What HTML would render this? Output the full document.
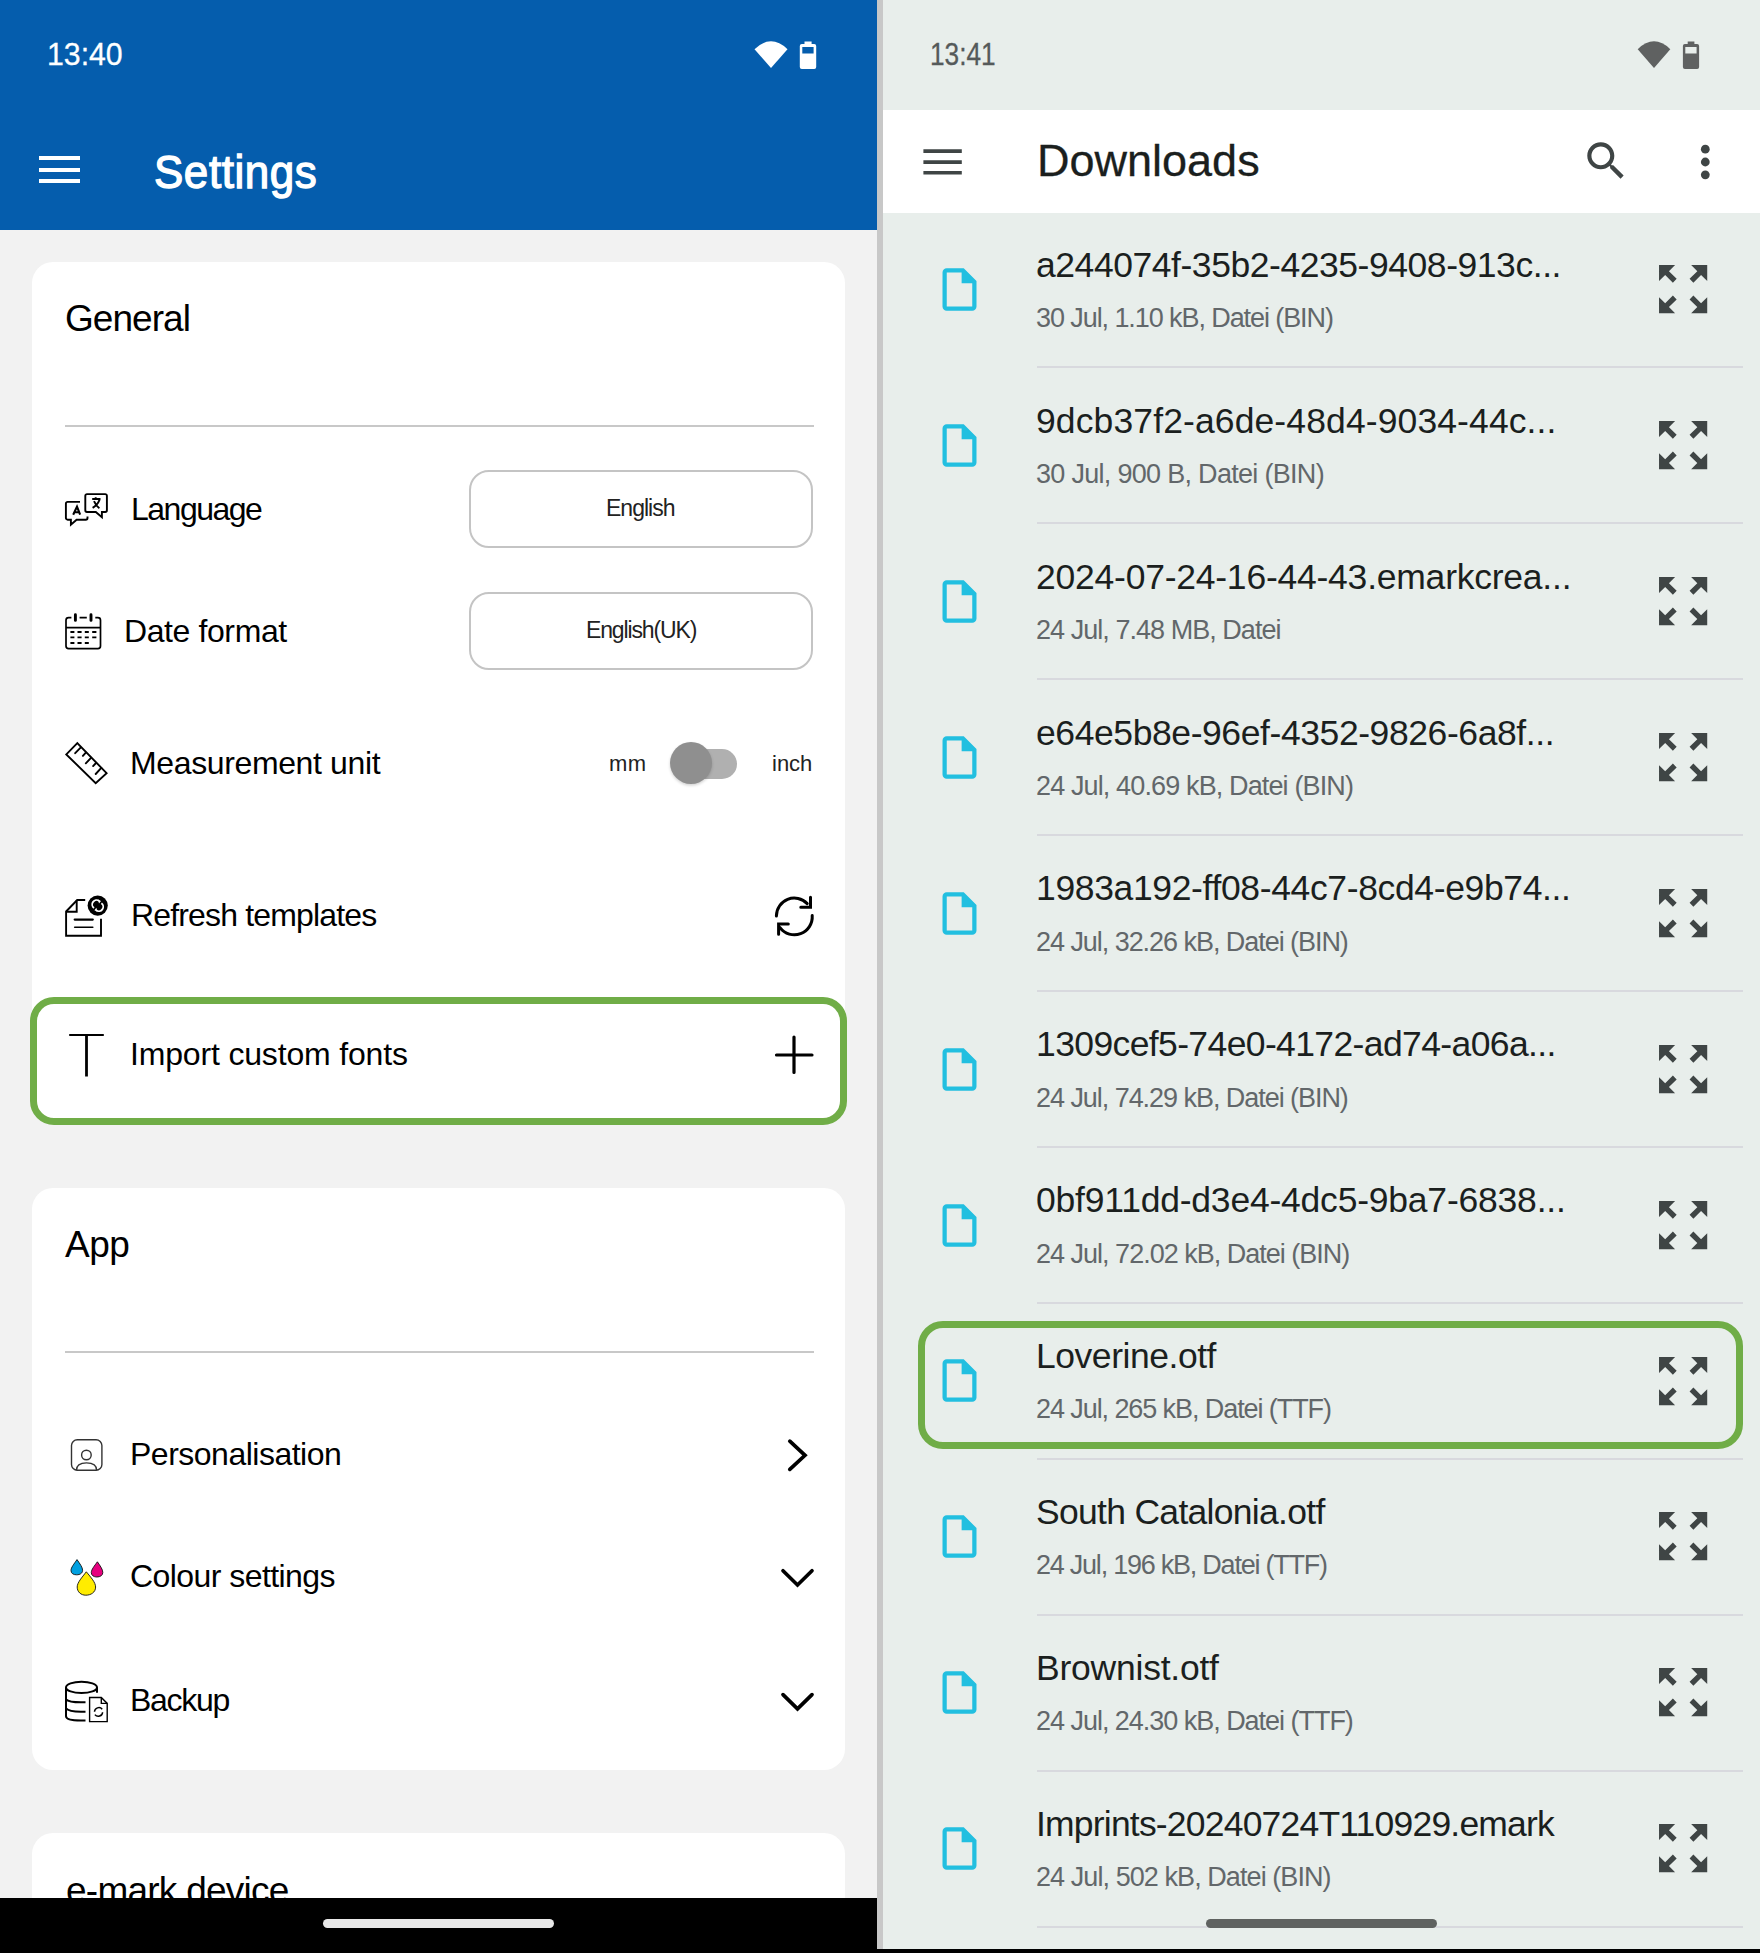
<!DOCTYPE html>
<html><head><meta charset="utf-8">
<style>
*{margin:0;padding:0;box-sizing:border-box}
html,body{width:1760px;height:1953px;overflow:hidden;background:#fff}
body{position:relative;font-family:"Liberation Sans",sans-serif}
.a{position:absolute}
.t{position:absolute;white-space:nowrap;line-height:1}
svg{position:absolute;overflow:visible}
#L{position:absolute;left:0;top:0;width:877px;height:1953px;background:#F2F2F2;overflow:hidden}
#R{position:absolute;left:883px;top:0;width:877px;height:1953px;background:#E8EEEB;overflow:hidden}
#sep{position:absolute;left:877px;top:0;width:6px;height:1953px;background:#C8C8C8}
.card{position:absolute;left:32px;width:813px;background:#fff;border-radius:21px}
.lbl{font-size:32px;color:#000}
.hd{font-size:37px;color:#000}
.box{position:absolute;left:469px;width:344px;height:78px;border:2px solid #C4C4C4;border-radius:20px}
.dv{position:absolute;left:65px;width:749px;height:2px;background:#C8C8C8}
.ti{font-size:35.5px;color:#1B1F1E;letter-spacing:-0.23px}
.st{font-size:27px;color:#62676A;letter-spacing:-1.1px}
.rdv{position:absolute;left:154px;width:706px;height:2px;background:#D8D9DE}
</style></head><body>
<div id="L">
  <div class="a" style="left:0;top:0;width:877px;height:230px;background:#055DAD"></div>
  <div class="t" style="left:47px;top:38px;font-size:32px;color:#fff;transform:scaleX(0.945);transform-origin:0 0;-webkit-text-stroke:0.3px #fff">13:40</div>
  
  <div class="a" style="left:39px;top:156px;width:41px;height:4px;background:#fff"></div>
  <div class="a" style="left:39px;top:167.5px;width:41px;height:4px;background:#fff"></div>
  <div class="a" style="left:39px;top:179px;width:41px;height:4px;background:#fff"></div>
  <div class="t" style="left:154px;top:149px;font-size:46px;color:#fff;-webkit-text-stroke:1.3px #fff;letter-spacing:0.6px;transform:scaleX(0.955);transform-origin:0 0">Settings</div>

  <div class="card" style="top:262px;height:860px"></div>
  <div class="t hd" style="left:65px;top:300px;letter-spacing:-0.95px">General</div>
  <div class="dv" style="top:425px"></div>

  <div class="t lbl" style="left:131px;top:493px;letter-spacing:-1.5px">Language</div>
  <div class="box" style="top:470px"></div>
  <div class="t" style="left:606px;top:497px;font-size:23px;color:#222;letter-spacing:-1px">English</div>

  <div class="t lbl" style="left:124px;top:615px;letter-spacing:-0.4px">Date format</div>
  <div class="box" style="top:592px"></div>
  <div class="t" style="left:586px;top:619px;font-size:23px;color:#222;letter-spacing:-1.13px">English(UK)</div>

  <div class="t lbl" style="left:130px;top:747px;letter-spacing:-0.37px">Measurement unit</div>
  <div class="t" style="left:609px;top:753px;font-size:22px;color:#222;letter-spacing:0.5px">mm</div>
  <div class="a" style="left:680px;top:749px;width:57px;height:30px;border-radius:15px;background:#B0B0B0"></div>
  <div class="a" style="left:670px;top:741.5px;width:42px;height:42px;border-radius:21px;background:#8F8F8F;box-shadow:0 1.5px 3px rgba(0,0,0,.18)"></div>
  <div class="t" style="left:772px;top:753px;font-size:22px;color:#222">inch</div>

  <div class="t lbl" style="left:131px;top:899px;letter-spacing:-0.84px">Refresh templates</div>

  <div class="a" style="left:30px;top:997px;width:817px;height:128px;border:7px solid #70AD47;border-radius:24px;background:#fff"></div>
  <div class="t lbl" style="left:130px;top:1038px;letter-spacing:-0.17px">Import custom fonts</div>

  <div class="card" style="top:1188px;height:582px"></div>
  <div class="t hd" style="left:65px;top:1226px;letter-spacing:-0.5px">App</div>
  <div class="dv" style="top:1351px"></div>
  <div class="t lbl" style="left:130px;top:1437.5px;letter-spacing:-0.5px">Personalisation</div>
  <div class="t lbl" style="left:130px;top:1560px;letter-spacing:-0.56px">Colour settings</div>
  <div class="t lbl" style="left:130px;top:1684px;letter-spacing:-1.3px">Backup</div>

  <div class="card" style="top:1833px;height:200px"></div>
  <div class="t hd" style="left:66px;top:1871.5px;letter-spacing:-0.75px">e-mark device</div>

  <div class="a" style="left:0;top:1898px;width:877px;height:55px;background:#000"></div>
  <div class="a" style="left:323px;top:1919px;width:231px;height:9px;border-radius:4.5px;background:#E8E8E8"></div>
</div>
<div id="sep"></div>
<div class="a" style="left:877px;top:1949px;width:6px;height:4px;background:#000"></div>
<div id="R">
  <div class="t" style="left:47px;top:38px;font-size:32px;color:#555A5A;transform:scaleX(0.82);transform-origin:0 0;-webkit-text-stroke:0.3px #555A5A">13:41</div>
  <div class="a" style="left:0;top:110px;width:877px;height:103px;background:#fff"></div>
  <div class="t" style="left:154px;top:138px;font-size:45px;color:#1B1F1E;-webkit-text-stroke:0.3px #1B1F1E">Downloads</div>
  <svg style="left:51px;top:264.0px" width="51" height="51" viewBox="0 0 24 24"><path d="M14 2H6c-1.1 0-1.99.9-1.99 2L4 20c0 1.1.89 2 1.99 2H18c1.1 0 2-.9 2-2V8l-6-6zM6 20V4h7v5h5v11H6z" fill="#22BFE0"/></svg>
  <div class="t ti" style="left:153px;top:247.8px;letter-spacing:-0.448px">a244074f-35b2-4235-9408-913c...</div>
  <div class="t st" style="left:153px;top:305.0px;letter-spacing:-1.081px">30 Jul, 1.10 kB, Datei (BIN)</div>
  <svg style="left:767.8px;top:257.1px" width="64.25" height="64.25" viewBox="0 0 24 24"><path d="M15 3l2.3 2.3-2.89 2.87 1.42 1.42L18.7 6.7 21 9V3zM3 9l2.3-2.3 2.87 2.89 1.42-1.42L6.7 5.3 9 3H3zm6 12l-2.3-2.3 2.89-2.87-1.42-1.42L5.3 17.3 3 15v6zm12-6l-2.3 2.3-2.87-2.89-1.42 1.42 2.89 2.87L15 21h6z" fill="#3F4545"/></svg>
  <div class="rdv" style="top:366.4px"></div>
  <svg style="left:51px;top:419.91999999999996px" width="51" height="51" viewBox="0 0 24 24"><path d="M14 2H6c-1.1 0-1.99.9-1.99 2L4 20c0 1.1.89 2 1.99 2H18c1.1 0 2-.9 2-2V8l-6-6zM6 20V4h7v5h5v11H6z" fill="#22BFE0"/></svg>
  <div class="t ti" style="left:153px;top:403.72px;letter-spacing:0.115px">9dcb37f2-a6de-48d4-9034-44c...</div>
  <div class="t st" style="left:153px;top:460.91999999999996px;letter-spacing:-0.7px">30 Jul, 900 B, Datei (BIN)</div>
  <svg style="left:767.8px;top:413.02px" width="64.25" height="64.25" viewBox="0 0 24 24"><path d="M15 3l2.3 2.3-2.89 2.87 1.42 1.42L18.7 6.7 21 9V3zM3 9l2.3-2.3 2.87 2.89 1.42-1.42L6.7 5.3 9 3H3zm6 12l-2.3-2.3 2.89-2.87-1.42-1.42L5.3 17.3 3 15v6zm12-6l-2.3 2.3-2.87-2.89-1.42 1.42 2.89 2.87L15 21h6z" fill="#3F4545"/></svg>
  <div class="rdv" style="top:522.3199999999999px"></div>
  <svg style="left:51px;top:575.8399999999999px" width="51" height="51" viewBox="0 0 24 24"><path d="M14 2H6c-1.1 0-1.99.9-1.99 2L4 20c0 1.1.89 2 1.99 2H18c1.1 0 2-.9 2-2V8l-6-6zM6 20V4h7v5h5v11H6z" fill="#22BFE0"/></svg>
  <div class="t ti" style="left:153px;top:559.64px;letter-spacing:-0.231px">2024-07-24-16-44-43.emarkcrea...</div>
  <div class="t st" style="left:153px;top:616.8399999999999px;letter-spacing:-0.959px">24 Jul, 7.48 MB, Datei</div>
  <svg style="left:767.8px;top:568.94px" width="64.25" height="64.25" viewBox="0 0 24 24"><path d="M15 3l2.3 2.3-2.89 2.87 1.42 1.42L18.7 6.7 21 9V3zM3 9l2.3-2.3 2.87 2.89 1.42-1.42L6.7 5.3 9 3H3zm6 12l-2.3-2.3 2.89-2.87-1.42-1.42L5.3 17.3 3 15v6zm12-6l-2.3 2.3-2.87-2.89-1.42 1.42 2.89 2.87L15 21h6z" fill="#3F4545"/></svg>
  <div class="rdv" style="top:678.24px"></div>
  <svg style="left:51px;top:731.76px" width="51" height="51" viewBox="0 0 24 24"><path d="M14 2H6c-1.1 0-1.99.9-1.99 2L4 20c0 1.1.89 2 1.99 2H18c1.1 0 2-.9 2-2V8l-6-6zM6 20V4h7v5h5v11H6z" fill="#22BFE0"/></svg>
  <div class="t ti" style="left:153px;top:715.56px;letter-spacing:-0.414px">e64e5b8e-96ef-4352-9826-6a8f...</div>
  <div class="t st" style="left:153px;top:772.76px;letter-spacing:-0.866px">24 Jul, 40.69 kB, Datei (BIN)</div>
  <svg style="left:767.8px;top:724.86px" width="64.25" height="64.25" viewBox="0 0 24 24"><path d="M15 3l2.3 2.3-2.89 2.87 1.42 1.42L18.7 6.7 21 9V3zM3 9l2.3-2.3 2.87 2.89 1.42-1.42L6.7 5.3 9 3H3zm6 12l-2.3-2.3 2.89-2.87-1.42-1.42L5.3 17.3 3 15v6zm12-6l-2.3 2.3-2.87-2.89-1.42 1.42 2.89 2.87L15 21h6z" fill="#3F4545"/></svg>
  <div class="rdv" style="top:834.16px"></div>
  <svg style="left:51px;top:887.68px" width="51" height="51" viewBox="0 0 24 24"><path d="M14 2H6c-1.1 0-1.99.9-1.99 2L4 20c0 1.1.89 2 1.99 2H18c1.1 0 2-.9 2-2V8l-6-6zM6 20V4h7v5h5v11H6z" fill="#22BFE0"/></svg>
  <div class="t ti" style="left:153px;top:871.48px;letter-spacing:-0.359px">1983a192-ff08-44c7-8cd4-e9b74...</div>
  <div class="t st" style="left:153px;top:928.68px;letter-spacing:-1.046px">24 Jul, 32.26 kB, Datei (BIN)</div>
  <svg style="left:767.8px;top:880.78px" width="64.25" height="64.25" viewBox="0 0 24 24"><path d="M15 3l2.3 2.3-2.89 2.87 1.42 1.42L18.7 6.7 21 9V3zM3 9l2.3-2.3 2.87 2.89 1.42-1.42L6.7 5.3 9 3H3zm6 12l-2.3-2.3 2.89-2.87-1.42-1.42L5.3 17.3 3 15v6zm12-6l-2.3 2.3-2.87-2.89-1.42 1.42 2.89 2.87L15 21h6z" fill="#3F4545"/></svg>
  <div class="rdv" style="top:990.0799999999999px"></div>
  <svg style="left:51px;top:1043.6px" width="51" height="51" viewBox="0 0 24 24"><path d="M14 2H6c-1.1 0-1.99.9-1.99 2L4 20c0 1.1.89 2 1.99 2H18c1.1 0 2-.9 2-2V8l-6-6zM6 20V4h7v5h5v11H6z" fill="#22BFE0"/></svg>
  <div class="t ti" style="left:153px;top:1027.4px;letter-spacing:-0.614px">1309cef5-74e0-4172-ad74-a06a...</div>
  <div class="t st" style="left:153px;top:1084.6px;letter-spacing:-1.046px">24 Jul, 74.29 kB, Datei (BIN)</div>
  <svg style="left:767.8px;top:1036.7px" width="64.25" height="64.25" viewBox="0 0 24 24"><path d="M15 3l2.3 2.3-2.89 2.87 1.42 1.42L18.7 6.7 21 9V3zM3 9l2.3-2.3 2.87 2.89 1.42-1.42L6.7 5.3 9 3H3zm6 12l-2.3-2.3 2.89-2.87-1.42-1.42L5.3 17.3 3 15v6zm12-6l-2.3 2.3-2.87-2.89-1.42 1.42 2.89 2.87L15 21h6z" fill="#3F4545"/></svg>
  <div class="rdv" style="top:1146.0px"></div>
  <svg style="left:51px;top:1199.52px" width="51" height="51" viewBox="0 0 24 24"><path d="M14 2H6c-1.1 0-1.99.9-1.99 2L4 20c0 1.1.89 2 1.99 2H18c1.1 0 2-.9 2-2V8l-6-6zM6 20V4h7v5h5v11H6z" fill="#22BFE0"/></svg>
  <div class="t ti" style="left:153px;top:1183.32px;letter-spacing:-0.214px">0bf911dd-d3e4-4dc5-9ba7-6838...</div>
  <div class="t st" style="left:153px;top:1240.52px;letter-spacing:-0.993px">24 Jul, 72.02 kB, Datei (BIN)</div>
  <svg style="left:767.8px;top:1192.62px" width="64.25" height="64.25" viewBox="0 0 24 24"><path d="M15 3l2.3 2.3-2.89 2.87 1.42 1.42L18.7 6.7 21 9V3zM3 9l2.3-2.3 2.87 2.89 1.42-1.42L6.7 5.3 9 3H3zm6 12l-2.3-2.3 2.89-2.87-1.42-1.42L5.3 17.3 3 15v6zm12-6l-2.3 2.3-2.87-2.89-1.42 1.42 2.89 2.87L15 21h6z" fill="#3F4545"/></svg>
  <div class="rdv" style="top:1301.92px"></div>
  <svg style="left:51px;top:1355.44px" width="51" height="51" viewBox="0 0 24 24"><path d="M14 2H6c-1.1 0-1.99.9-1.99 2L4 20c0 1.1.89 2 1.99 2H18c1.1 0 2-.9 2-2V8l-6-6zM6 20V4h7v5h5v11H6z" fill="#22BFE0"/></svg>
  <div class="t ti" style="left:153px;top:1339.24px;letter-spacing:-0.457px">Loverine.otf</div>
  <div class="t st" style="left:153px;top:1396.44px;letter-spacing:-1.082px">24 Jul, 265 kB, Datei (TTF)</div>
  <svg style="left:767.8px;top:1348.54px" width="64.25" height="64.25" viewBox="0 0 24 24"><path d="M15 3l2.3 2.3-2.89 2.87 1.42 1.42L18.7 6.7 21 9V3zM3 9l2.3-2.3 2.87 2.89 1.42-1.42L6.7 5.3 9 3H3zm6 12l-2.3-2.3 2.89-2.87-1.42-1.42L5.3 17.3 3 15v6zm12-6l-2.3 2.3-2.87-2.89-1.42 1.42 2.89 2.87L15 21h6z" fill="#3F4545"/></svg>
  <div class="rdv" style="top:1457.8400000000001px"></div>
  <svg style="left:51px;top:1511.36px" width="51" height="51" viewBox="0 0 24 24"><path d="M14 2H6c-1.1 0-1.99.9-1.99 2L4 20c0 1.1.89 2 1.99 2H18c1.1 0 2-.9 2-2V8l-6-6zM6 20V4h7v5h5v11H6z" fill="#22BFE0"/></svg>
  <div class="t ti" style="left:153px;top:1495.1599999999999px;letter-spacing:-0.702px">South Catalonia.otf</div>
  <div class="t st" style="left:153px;top:1552.36px;letter-spacing:-1.235px">24 Jul, 196 kB, Datei (TTF)</div>
  <svg style="left:767.8px;top:1504.46px" width="64.25" height="64.25" viewBox="0 0 24 24"><path d="M15 3l2.3 2.3-2.89 2.87 1.42 1.42L18.7 6.7 21 9V3zM3 9l2.3-2.3 2.87 2.89 1.42-1.42L6.7 5.3 9 3H3zm6 12l-2.3-2.3 2.89-2.87-1.42-1.42L5.3 17.3 3 15v6zm12-6l-2.3 2.3-2.87-2.89-1.42 1.42 2.89 2.87L15 21h6z" fill="#3F4545"/></svg>
  <div class="rdv" style="top:1613.7599999999998px"></div>
  <svg style="left:51px;top:1667.28px" width="51" height="51" viewBox="0 0 24 24"><path d="M14 2H6c-1.1 0-1.99.9-1.99 2L4 20c0 1.1.89 2 1.99 2H18c1.1 0 2-.9 2-2V8l-6-6zM6 20V4h7v5h5v11H6z" fill="#22BFE0"/></svg>
  <div class="t ti" style="left:153px;top:1651.08px;letter-spacing:-0.229px">Brownist.otf</div>
  <div class="t st" style="left:153px;top:1708.28px;letter-spacing:-1.028px">24 Jul, 24.30 kB, Datei (TTF)</div>
  <svg style="left:767.8px;top:1660.38px" width="64.25" height="64.25" viewBox="0 0 24 24"><path d="M15 3l2.3 2.3-2.89 2.87 1.42 1.42L18.7 6.7 21 9V3zM3 9l2.3-2.3 2.87 2.89 1.42-1.42L6.7 5.3 9 3H3zm6 12l-2.3-2.3 2.89-2.87-1.42-1.42L5.3 17.3 3 15v6zm12-6l-2.3 2.3-2.87-2.89-1.42 1.42 2.89 2.87L15 21h6z" fill="#3F4545"/></svg>
  <div class="rdv" style="top:1769.6799999999998px"></div>
  <svg style="left:51px;top:1823.2px" width="51" height="51" viewBox="0 0 24 24"><path d="M14 2H6c-1.1 0-1.99.9-1.99 2L4 20c0 1.1.89 2 1.99 2H18c1.1 0 2-.9 2-2V8l-6-6zM6 20V4h7v5h5v11H6z" fill="#22BFE0"/></svg>
  <div class="t ti" style="left:153px;top:1807.0px;letter-spacing:-0.8px">Imprints-20240724T110929.emark</div>
  <div class="t st" style="left:153px;top:1864.2px;letter-spacing:-0.926px">24 Jul, 502 kB, Datei (BIN)</div>
  <svg style="left:767.8px;top:1816.3000000000002px" width="64.25" height="64.25" viewBox="0 0 24 24"><path d="M15 3l2.3 2.3-2.89 2.87 1.42 1.42L18.7 6.7 21 9V3zM3 9l2.3-2.3 2.87 2.89 1.42-1.42L6.7 5.3 9 3H3zm6 12l-2.3-2.3 2.89-2.87-1.42-1.42L5.3 17.3 3 15v6zm12-6l-2.3 2.3-2.87-2.89-1.42 1.42 2.89 2.87L15 21h6z" fill="#3F4545"/></svg>
  <div class="rdv" style="top:1925.6px"></div>
  <div class="a" style="left:35px;top:1321px;width:825px;height:128px;border:7px solid #70AD47;border-radius:25px"></div>
  <div class="a" style="left:0;top:1949px;width:877px;height:4px;background:#000"></div>
  <div class="a" style="left:323px;top:1919px;width:231px;height:9px;border-radius:4.5px;background:#5F6260"></div>
</div>
<svg style="left:0;top:0" width="1760" height="1953" viewBox="0 0 1760 1953">
<g fill="none" stroke="#000" stroke-linecap="butt" stroke-linejoin="miter">
 <!-- language icon -->
 <g stroke-width="1.9">
  <path d="M80 501.9 H67.6 a1.7 1.7 0 0 0 -1.7 1.7 V518 a1.7 1.7 0 0 0 1.7 1.7 H70.9 V524.7 L76.6 519.7 H85.8 a1.7 1.7 0 0 0 1.7 -1.7 V516.6"/>
  <path d="M87 494.1 H105.2 a1.7 1.7 0 0 1 1.7 1.7 V510.3 a1.7 1.7 0 0 1 -1.7 1.7 H101.9 V517.2 L95.8 512 H87 a1.7 1.7 0 0 1 -1.7 -1.7 V495.8 a1.7 1.7 0 0 1 1.7 -1.7z"/>
  <path d="M73.2 514.7 L77 506.6 L80.1 514.7 M74.3 512.3 H79.2" stroke-width="2.1"/>
  <path d="M92.2 499 H100.5 M95.7 497.2 V499 M94 501.2 Q96 506 99.4 508.2 M99.6 499.6 Q97.5 505 92.6 507.9" stroke-width="1.9"/>
 </g>
 <!-- calendar -->
 <g stroke-width="1.7">
  <path d="M71.4 617.7 H68.6 a2.6 2.6 0 0 0 -2.6 2.6 V646 a2.6 2.6 0 0 0 2.6 2.6 H97.9 a2.6 2.6 0 0 0 2.6 -2.6 V620.3 a2.6 2.6 0 0 0 -2.6 -2.6 H95.3"/>
  <path d="M79.6 617.7 H86.8 M66 627.6 H100.5"/>
  <path d="M75.4 614.8 V620.4 M91 614.8 V620.4" stroke-width="2.9" stroke-linecap="round"/>
  <path d="M70.4 632 H74.4 M77.5 632 H81.6 M84.8 632 H88.8 M92.2 632 H96.4" stroke-width="2.2"/>
  <path d="M70.4 637.4 H74.4 M77.5 637.4 H81.6 M84.8 637.4 H88.8 M92.2 637.4 H96.4 M70.4 643 H74.4 M77.5 643 H81.6 M84.8 643 H88.8" stroke-width="1.8"/>
 </g>
 <!-- ruler -->
 <g stroke-width="1.9">
  <path d="M77.3 743.2 L66.3 754.4 L95.7 783.2 L106.6 773.1 Z"/>
  <path d="M80.6 747.7 L75.2 753.2 M85.8 752.6 L82.9 755.9 M91 757.8 L85.8 763.3 M96 763 L93.1 766.1 M101.3 767.9 L95.7 774" stroke-linecap="round"/>
 </g>
 <!-- refresh doc -->
 <g stroke-width="1.9">
  <path d="M85.2 900 H77.2 L66.1 911.5 V935.7 H101 V918.7"/>
  <path d="M76.7 900 V911.8 H66.1"/>
  <path d="M74.7 919.6 H92.8" stroke-width="2.2" stroke-linecap="round"/>
  <path d="M74.7 927.3 H92.8" stroke-width="1.6" stroke-linecap="round"/>
 </g>
 <circle cx="97.7" cy="905.6" r="10.1" fill="#000" stroke="none"/>
 <path d="M94 908 A4.2 4.2 0 0 1 99.2 900.9 M101.4 903.2 A4.2 4.2 0 0 1 96.2 910.3" stroke="#fff" stroke-width="1.8"/>
 <path d="M98 899.5 L101 901 L99 903.5 Z M97.4 911.7 L94.4 910.2 L96.4 907.7 Z" fill="#fff" stroke="none"/>
 <!-- refresh arrows right -->
 <g stroke-width="3" stroke-linecap="round">
  <path d="M776.4 916 A17.9 17.9 0 0 1 807.2 903.6"/>
  <path d="M810.5 897.3 V907.2 H800.8"/>
  <path d="M812.2 915.6 A17.9 17.9 0 0 1 780 927.6"/>
  <path d="M778.6 934.2 V924 H788.3"/>
 </g>
 <!-- T icon -->
 <path d="M70 1035 H103" stroke-width="2.2" stroke-linecap="round"/>
 <path d="M86.5 1035 V1076.5" stroke-width="2.8"/>
 <!-- plus -->
 <path d="M776.5 1055 H812 M794 1037 V1072.5" stroke-width="3.2" stroke-linecap="round"/>
 <!-- person -->
 <g stroke="#333" stroke-width="1.4">
  <rect x="71.5" y="1439.7" width="30.4" height="30.5" rx="5.8"/>
  <circle cx="86.4" cy="1455" r="4.8"/>
  <path d="M76.5 1470.2 C76.5 1465 81 1462.9 86.5 1462.9 C92 1462.9 96.6 1465 96.6 1470.2"/>
 </g>
 <!-- chevrons -->
 <g stroke-width="3.7" stroke-linecap="round">
  <path d="M789.8 1441.2 L805 1455.3 L789.8 1469.4"/>
  <path d="M783 1570.8 L797.5 1585 L812 1570.8"/>
  <path d="M783 1694.6 L797.5 1708.8 L812 1694.6"/>
 </g>
 <!-- drops -->
 <path d="M77 1559.6 C74 1564 71 1567.5 71 1570.5 C71 1573.5 73.5 1574.8 76.6 1574.8 C80 1574.8 82.6 1573.2 82.6 1570.3 C82.6 1567.3 80 1564 77 1559.6Z" fill="#00A0E0" stroke="#111" stroke-width="0.9"/>
 <path d="M97.4 1561.8 C94.4 1566 91.3 1569.5 91.3 1572.6 C91.3 1575.5 93.8 1577 96.9 1577 C100.3 1577 102.8 1575.3 102.8 1572.5 C102.8 1569.5 100.3 1566 97.4 1561.8Z" fill="#E6007E" stroke="#111" stroke-width="0.9"/>
 <path d="M86.3 1571.8 C82 1577.5 77.2 1582.5 77.2 1587 C77.2 1592 81 1595.2 85.8 1595.2 C91 1595.2 95.6 1592.3 95.6 1587 C95.6 1582.5 91 1577.5 86.3 1571.8Z" fill="#FFEC00" stroke="#111" stroke-width="0.9"/>
 <!-- backup -->
 <g stroke-width="2">
  <ellipse cx="81.5" cy="1687.4" rx="15.5" ry="5.7"/>
  <path d="M66 1687.4 V1716.3 C66 1719 72 1720.6 81 1720.6 H85.5"/>
  <path d="M97 1687.4 V1692.8"/>
  <path d="M66 1699.5 C68 1701.5 74 1702.3 81 1702.3 H85.5"/>
  <path d="M66 1708.4 C68 1710.7 74 1711.7 81 1711.7 H85.5"/>
 </g>
 <g stroke-width="1.4">
  <path d="M101.3 1697.5 H89.6 V1721.6 H107.2 V1703.4 Z"/>
  <path d="M101.3 1697.5 V1703.4 H107.2"/>
  <path d="M94.5 1711.8 A4.3 4.3 0 0 1 102.2 1709.3 M102.6 1712.2 A4.3 4.3 0 0 1 94.9 1714.6" stroke-width="1.5"/>
 </g>
</g>
<!-- status bar icons left (white) -->
<path d="M754.5 49.2 Q771 33.5 787.5 49.2 L771 68 Z" fill="#fff"/>
<path d="M804.5 41.4 h7.1 v2.6 h2.6 a2 2 0 0 1 2 2 v21 a2 2 0 0 1 -2 2 h-12.4 a2 2 0 0 1 -2 -2 v-21 a2 2 0 0 1 2 -2 h2.7z M802.3 47 v6.6 h11.3 v-6.6z" fill="#fff" fill-rule="evenodd"/>
<!-- right status -->
<path d="M1637.7 49.2 Q1654 33.5 1670.3 49.2 L1654 68 Z" fill="#5F6161"/>
<path d="M1687.7 41.4 h6.7 v2.6 h2.7 a2 2 0 0 1 2 2 v21 a2 2 0 0 1 -2 2 h-12.2 a2 2 0 0 1 -2 -2 v-21 a2 2 0 0 1 2 -2 h2.8z M1685.3 47 v6.6 h11.3 v-6.6z" fill="#5F6161" fill-rule="evenodd"/>
<!-- right hamburger -->
<path d="M923.4 149.3 h38.4 v3.7 h-38.4z M923.4 160.2 h38.4 v3.7 h-38.4z M923.4 170.9 h38.4 v3.7 h-38.4z" fill="#3F4545"/>
<!-- search -->
<g transform="translate(1581.04 136.04) scale(2.08)"><path d="M15.5 14h-.79l-.28-.27C15.41 12.59 16 11.110 16 9.5 16 5.91 13.09 3 9.5 3S3 5.91 3 9.5 5.91 16 9.5 16c1.61 0 3.09-.59 4.23-1.57l.27.28v.79l5 4.99L20.49 19l-4.99-5zm-6 0C7.01 14 5 11.99 5 9.5S7.010 5 9.5 5 14 7.01 14 9.5 11.99 14 9.5 14z" fill="#3F4545"/></g>
<!-- dots -->
<circle cx="1705.3" cy="149.2" r="4.4" fill="#3F4545"/>
<circle cx="1705.3" cy="162" r="4.4" fill="#3F4545"/>
<circle cx="1705.3" cy="174.8" r="4.4" fill="#3F4545"/>
</svg>

</body></html>
